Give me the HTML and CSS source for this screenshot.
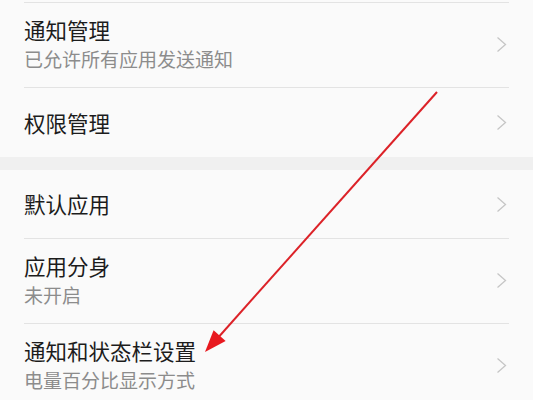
FILE: index.html
```html
<!DOCTYPE html>
<html lang="zh-CN">
<head>
<meta charset="utf-8">
<link rel="stylesheet" href="styles.css">
</head>
<body>
<div class="page">
  <div class="group">
    <div class="stub"></div>
    <div class="row two">
      <div class="inner bordered">
        <div class="texts">
          <div class="title">通知管理</div>
          <div class="sub">已允许所有应用发送通知</div>
        </div>
        <svg class="chev" viewBox="0 0 11 17"><path d="M1.5 1.5 L9.5 8.5 L1.5 15.5"/></svg>
      </div>
    </div>
    <div class="row one">
      <div class="inner bordered">
        <div class="texts"><div class="title">权限管理</div></div>
        <svg class="chev" viewBox="0 0 11 17"><path d="M1.5 1.5 L9.5 8.5 L1.5 15.5"/></svg>
      </div>
    </div>
  </div>
  <div class="gap"></div>
  <div class="group">
    <div class="row one first">
      <div class="inner">
        <div class="texts"><div class="title">默认应用</div></div>
        <svg class="chev" viewBox="0 0 11 17"><path d="M1.5 1.5 L9.5 8.5 L1.5 15.5"/></svg>
      </div>
    </div>
    <div class="row two">
      <div class="inner bordered">
        <div class="texts">
          <div class="title">应用分身</div>
          <div class="sub">未开启</div>
        </div>
        <svg class="chev" viewBox="0 0 11 17"><path d="M1.5 1.5 L9.5 8.5 L1.5 15.5"/></svg>
      </div>
    </div>
    <div class="row two">
      <div class="inner bordered">
        <div class="texts">
          <div class="title">通知和状态栏设置</div>
          <div class="sub">电量百分比显示方式</div>
        </div>
        <svg class="chev" viewBox="0 0 11 17"><path d="M1.5 1.5 L9.5 8.5 L1.5 15.5"/></svg>
      </div>
    </div>
  </div>
  <svg class="arrow" viewBox="0 0 533 400" width="533" height="400">
    <line x1="437" y1="92" x2="216" y2="340" />
    <polygon points="205,352 213.6,330.3 225.6,340.9" />
  </svg>
</div>
</body>
</html>
```
FILE: styles.css
```css
html, body {
  margin: 0;
  padding: 0;
  background: #fafafa;
}
.page {
  position: relative;
  width: 533px;
  height: 400px;
  overflow: hidden;
  font-family: "Noto Sans CJK SC", "Noto Sans", sans-serif;
}
.group {
  background: #fafafa;
}
.stub {
  height: 2px;
}
.gap {
  height: 13px;
  background: #f0f0f0;
}
.row {
  padding-left: 24px;
}
.inner {
  margin-right: 24px;
  display: flex;
  align-items: center;
  justify-content: space-between;
  box-sizing: border-box;
}
.bordered {
  border-top: 1px solid #e3e3e3;
}
.row.two .inner {
  height: 85px;
  padding-bottom: 2px;
}
.row.one .inner {
  height: 70px;
}
.row.one.first .inner {
  height: 68px;
}
.texts {
  display: flex;
  flex-direction: column;
}
.title {
  font-size: 21.5px;
  line-height: 30px;
  color: #1c1c1c;
}
.sub {
  font-size: 19px;
  line-height: 28px;
  color: #8c8c8c;
}
.chev {
  width: 11px;
  height: 17px;
  margin-right: 2px;
  fill: none;
  stroke: #c6c6c6;
  stroke-width: 1.3;
}
.arrow {
  position: absolute;
  left: 0;
  top: 0;
}
.arrow line {
  stroke: #dc2228;
  stroke-width: 2;
}
.arrow polygon {
  fill: #e8191f;
}
```
